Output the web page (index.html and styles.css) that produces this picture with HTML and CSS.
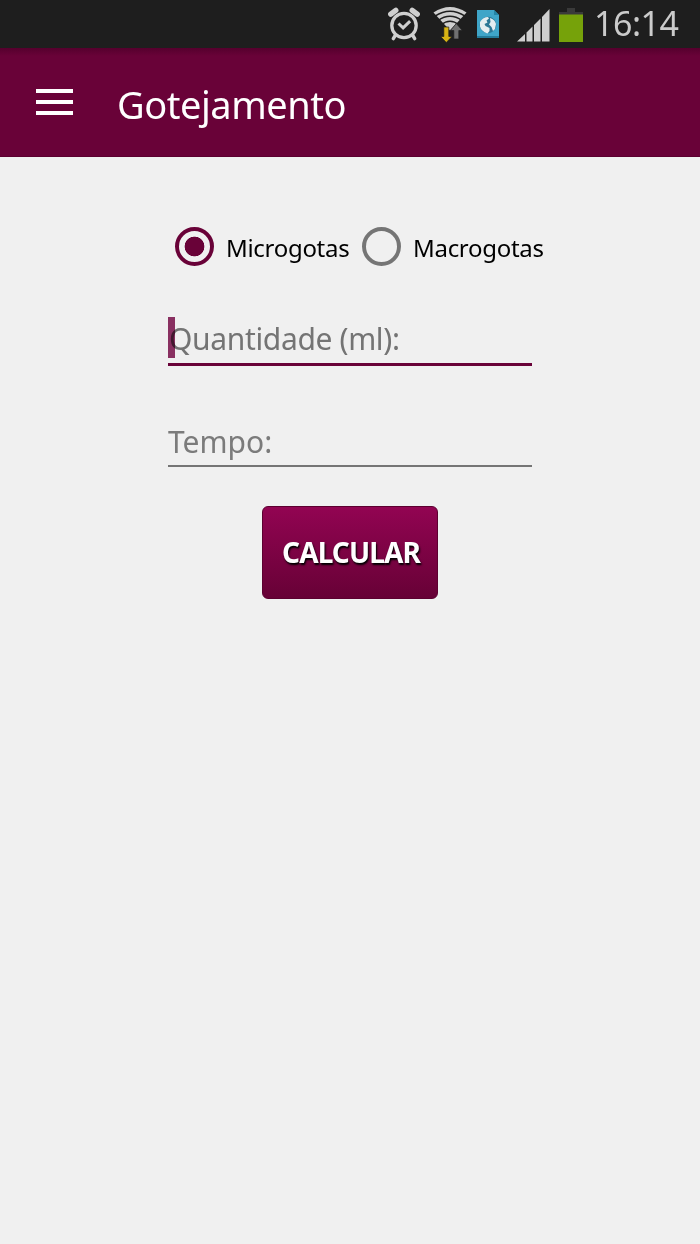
FILE: index.html
```html
<!DOCTYPE html>
<html lang="pt-BR">
<head>
    <meta charset="UTF-8">
    <meta name="viewport" content="width=device-width, initial-scale=1.0">
    <title>Gotejamento</title>
    <link rel="stylesheet" href="styles.css">
</head>
<body>

<div class="status-bar">
    <svg class="icon-alarm" width="32" height="36" viewBox="0 0 32 36" fill="none" stroke="#cfcfcf">
        <circle cx="16" cy="19.5" r="12.2" stroke-width="3.3"/>
        <path d="M2.8 8.200 7.800 4.400M29.200 8.200 24.200 4.400" stroke-width="5.4" stroke-linecap="round"/>
        <path d="M7.500 29l-2.200 3.600M24.500 29l2.200 3.600" stroke-width="3.4" stroke-linecap="round"/>
        <path d="M10.500 17.500l4.600 4.400 7-6.800" stroke-width="3"/>
    </svg>
    <svg class="icon-wifi" width="34" height="38" viewBox="0 0 34 38">
        <path d="M.5 7.500Q17-3.500 33.500 7.500L17 25.500z" fill="#cfcfcf"/>
        <g fill="none" stroke="#1e1e1e" stroke-width="1.5">
            <path d="M2 11.200Q17 1.400 32 11.200"/>
            <path d="M5 15.600Q17 7 29 15.600"/>
            <path d="M8 19.800Q17 12.600 26 19.800"/>
        </g>
        <path d="M10.800 22h5v9.500h3.200L13.300 37.500 7.600 31.500h3.200z" fill="#d8b414" stroke="#1e1e1e" stroke-width=".7"/>
        <path d="M23.300 18.500 29.300 25.500h-3.500V34h-5v-8.500h-3.500z" fill="#707070" stroke="#1e1e1e" stroke-width=".7"/>
    </svg>
    <svg class="icon-globe" width="22" height="28" viewBox="0 0 22 28">
        <path d="M0 0h17l5 5v23H0z" fill="#3fa5c8"/>
        <path d="M17 0l5 5h-5z" fill="#2484a5"/>
        <path d="M0 27h22" stroke="#247c9b" stroke-width="2"/>
        <circle cx="11" cy="15" r="8.300" fill="#2b7795"/>
        <path d="M3 12Q6 7 11 7l1 1.500-2.500 2 1 2-3 1.500 1 2 4 2 0 3-2 2.500Q4 21 3 16.500zM13 8q5 1.500 6 6l-1 5-2 2-1.500-4-2.500-2.500 1.500-2.500z" fill="#e4eef1"/>
    </svg>
    <svg class="icon-signal" width="33" height="33" viewBox="0 0 33 33" fill="#cfcfcf">
        <path d="M0 32.500 8 25v7.500zM9.500 23.500l6-6v15h-6zM17 16l6.500-6.500v23H17zM25 8l7.500-8v32.500H25z"/>
    </svg>
    <svg class="icon-battery" width="24" height="34" viewBox="0 0 24 34">
        <path d="M8 0h8v4h8v3H0V4h8z" fill="#3a3a3a"/>
        <path d="M0 6.500h24V34H0z" fill="#76a20a"/>
    </svg>
    <span class="clock">16:14</span>
</div>

<header class="app-bar">
    <div class="menu">
        <span></span>
        <span></span>
        <span></span>
    </div>
    <h1 class="title">Gotejamento</h1>
</header>

<main class="form">
    <div class="radio-group">
        <span class="radio checked"></span>
        <span class="radio-label micro">Microgotas</span>
        <span class="radio"></span>
        <span class="radio-label">Macrogotas</span>
    </div>

    <div class="field focused"><span class="hint">Quantidade (ml):</span></div>
    <div class="field"><span class="hint">Tempo:</span></div>

    <button class="calcular" type="button">CALCULAR</button>
</main>

</body>
</html>
```

FILE: styles.css
```css
* {
    box-sizing: border-box;
}

body {
    margin: 0;
    min-height: 1244px;
    background-color: #f0f0f0;
    font-family: "Noto Sans", sans-serif;
}

.status-bar {
    display: flex;
    align-items: flex-start;
    height: 48px;
    padding-left: 388px;
    background-color: #1e1e1e;
}

.status-bar svg {
    flex: none;
}

.icon-alarm {
    margin-top: 6px;
}

.icon-wifi {
    margin: 5px 0 0 13px;
}

.icon-globe {
    margin: 10px 0 0 10px;
}

.icon-signal {
    margin: 9px 0 0 18px;
}

.icon-battery {
    margin: 8px 0 0 9px;
}

.clock {
    margin-left: 11px;
    color: #cbcbcb;
    font-size: 34px;
    line-height: 46px;
    letter-spacing: -0.5px;
}

.app-bar {
    display: flex;
    align-items: center;
    height: 109px;
    padding-left: 36px;
    background: linear-gradient(#55002d, #690238 8px);
    border-bottom: 1px solid #5c0030;
}

.menu {
    display: flex;
    flex-direction: column;
    gap: 6.5px;
    width: 37px;
    margin-right: 44px;
}

.menu span {
    height: 4.5px;
    background-color: #fff;
}

.title {
    margin: 3px 0 0;
    color: #fff;
    font-size: 38px;
    font-weight: 400;
    line-height: 50px;
    letter-spacing: -0.45px;
}

.form {
    display: flex;
    flex-direction: column;
    align-items: center;
    padding-top: 70px;
}

.radio-group {
    display: flex;
    align-items: center;
    width: 364px;
    height: 39px;
    margin-bottom: 51px;
    padding-left: 7px;
    white-space: nowrap;
}

.radio {
    flex: none;
    width: 39px;
    height: 39px;
    border: 4px solid #757575;
    border-radius: 50%;
}

.radio.checked {
    border-color: #690238;
    background: radial-gradient(circle, #690238 9.5px, transparent 10.2px);
}

.radio-label {
    margin: 3px 0 0 12px;
    font-size: 24px;
    line-height: 36px;
    letter-spacing: -0.3px;
}

.micro {
    flex: none;
    width: 125px;
    margin-right: 11px;
}

.field {
    width: 364px;
    height: 42px;
    margin-bottom: 39px;
    border-bottom: 2px solid #757575;
}

.field.focused {
    height: 49px;
    margin-bottom: 59px;
    background: linear-gradient(#893061, #893061) 0 0 / 7px 41px no-repeat;
    border-bottom: 3px solid #690238;
}

.hint {
    display: block;
    color: #7b7b7b;
    font-size: 30px;
    line-height: 34px;
}

/* the cursor tints the first letter */
.focused .hint {
    padding-left: 1px;
    line-height: 44px;
    letter-spacing: -0.35px;
    mix-blend-mode: multiply;
}

.calcular {
    width: 176px;
    height: 93px;
    padding: 0 0 2px 2px;
    border: 1px solid #5c0030;
    border-radius: 6px;
    background: linear-gradient(#920452, #670136);
    color: #fff;
    font-family: inherit;
    font-size: 28px;
    font-weight: 700;
    letter-spacing: -0.9px;
    text-shadow: 1px 2px 2px #000;
}
```
